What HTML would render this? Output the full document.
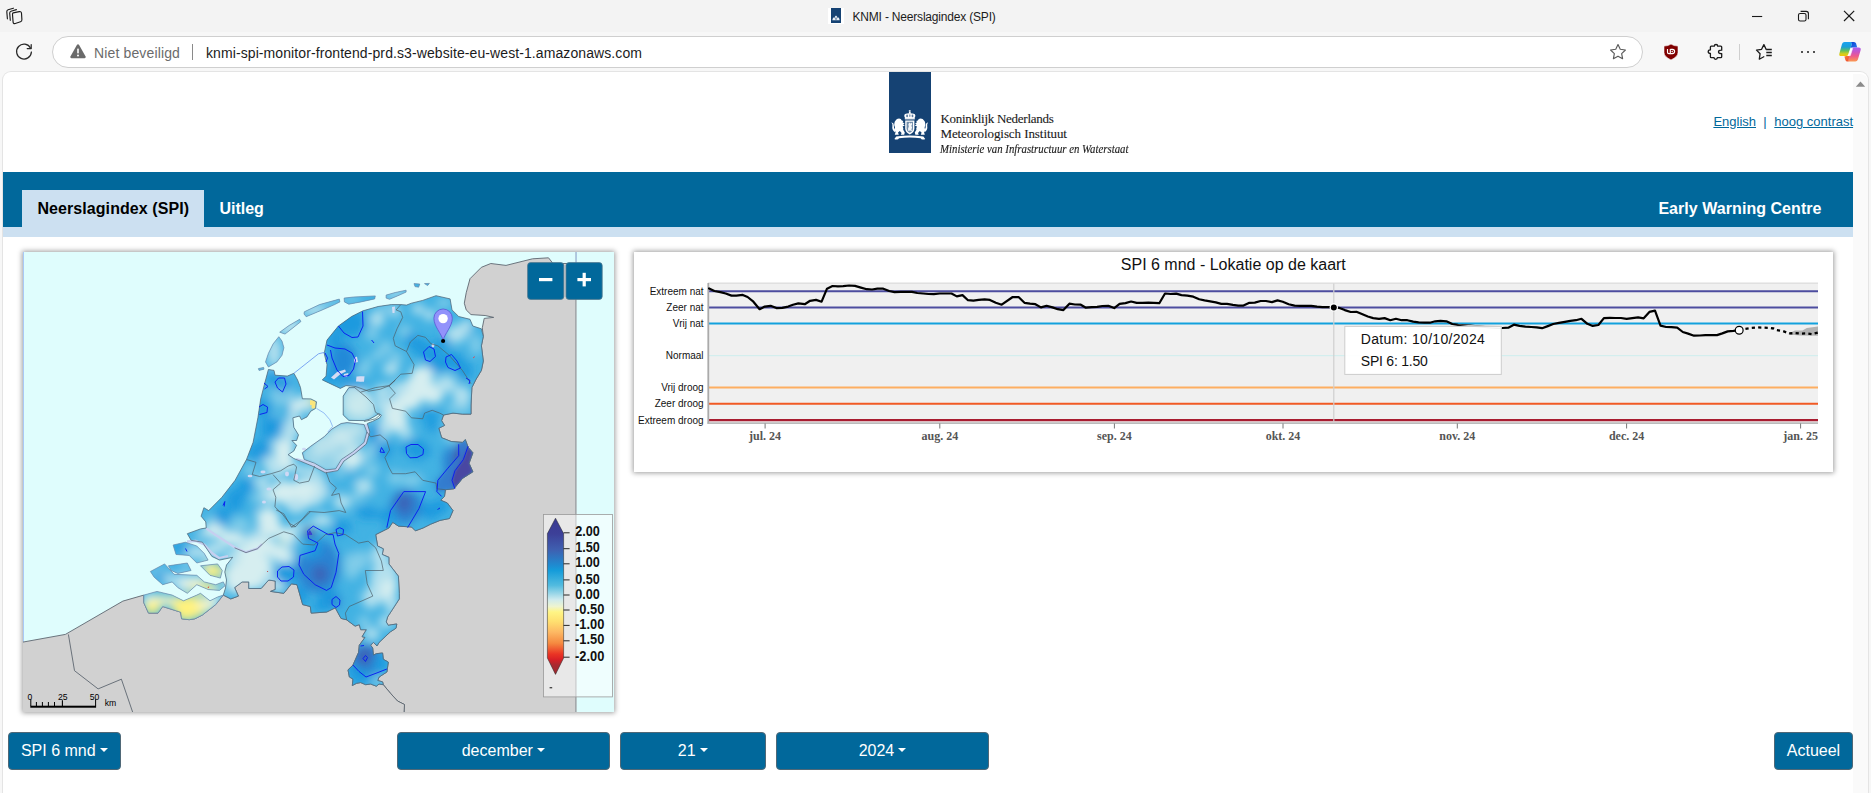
<!DOCTYPE html>
<html lang="nl"><head><meta charset="utf-8"><title>KNMI - Neerslagindex (SPI)</title>
<style>
html,body{margin:0;padding:0;overflow:hidden}
body{width:1871px;height:793px;overflow:hidden;background:#f7f7f7;position:relative;font-family:"Liberation Sans",sans-serif}
.abs{position:absolute}
.t{position:absolute;white-space:nowrap}
#titlebar{position:absolute;left:0;top:0;width:1871px;height:32px;background:#f3f3f3}
#toolbar{position:absolute;left:0;top:32px;width:1871px;height:40px;background:#f7f7f7}
#addr{position:absolute;left:51.7px;top:36px;width:1589.8px;height:29.5px;border:1px solid #cfcfcf;border-radius:16px;background:#fff}
#page{position:absolute;left:3px;top:72px;width:1865px;height:721px;background:#fff;border-radius:8px 8px 0 0;box-shadow:0 0 0 1px #e4e4e4}
#sb{position:absolute;left:1853px;top:74px;width:15px;height:719px;background:#fafafa;border-top-right-radius:8px}
.btn{position:absolute;top:732px;height:37.5px;box-sizing:border-box;background:#01689b;border:1px solid #4f6877;border-radius:4px;color:#fff;font:16px/35.5px "Liberation Sans",sans-serif;text-align:center;white-space:nowrap}
.caret{display:inline-block;margin-left:4.1px;vertical-align:4.1px;border-top:4.8px solid #fff;border-left:4.4px solid transparent;border-right:4.4px solid transparent}
.card{position:absolute;background:#fff;box-shadow:0 0 5px 1px rgba(0,0,0,.38)}
</style></head>
<body>
<div id="titlebar"></div><div id="toolbar"></div>
<svg class="abs" style="left:4px;top:6px" width="20" height="20" viewBox="0 0 20 20" fill="none" stroke="#1b1b1b" stroke-width="1.15" stroke-linejoin="round" stroke-linecap="round">
<path d="M9.2 6.9 L15.3 5.6 Q17.3 5.3 17.5 7.2 L17.9 13.6 Q18 15.2 16.5 15.7 L11.3 17.5 Q9.3 18.1 9.1 16.1 L8.5 8.6 Q8.4 7.2 9.2 6.9Z" fill="#f3f3f3"/>
<path d="M6.3 14.3 L5.7 7.2 Q5.6 5.6 7 5.2 L12.4 3.6"/>
<path d="M3.4 12.8 L2.8 5.8 Q2.7 4.2 4.1 3.8 L9.4 2.2"/>
</svg>
<div class="abs" style="left:828px;top:8px;width:16px;height:16px;background:#fff"></div>
<div class="abs" style="left:831px;top:8px;width:10px;height:15px;background:#154273"></div>
<svg class="abs" style="left:832px;top:15px" width="8" height="6" viewBox="0 0 8 6"><path d="M0.3 5.2 L1.2 2.2 L2.2 3.3 L3 1.6 L4 0.5 L5 1.6 L5.8 3.3 L6.8 2.2 L7.7 5.2 Z" fill="#e8eef6"/><rect x="3.1" y="2.6" width="1.8" height="2.2" fill="#154273" opacity=".55"/></svg>
<div class="t" style="top:10.64px;font:normal normal 12px/12px 'Liberation Sans', sans-serif;color:#1b1b1b;left:852.50px;letter-spacing:-0.19px;">KNMI - Neerslagindex (SPI)</div>
<svg class="abs" style="left:1740px;top:0" width="131" height="32" viewBox="1740 0 131 32" fill="none" stroke="#1a1a1a" stroke-width="1.1">
<path d="M1752 16.5 H1762.2"/>
<rect x="1798.5" y="13.5" width="7.5" height="7.5" rx="1.6"/>
<path d="M1800.6 11.4 H1806.2 Q1808.4 11.4 1808.4 13.6 V19.2"/>
<path d="M1844 10.8 L1854.2 21 M1854.2 10.8 L1844 21" stroke-width="1.2"/>
</svg>
<svg class="abs" style="left:12px;top:40px" width="24" height="24" viewBox="0 0 24 24" fill="none" stroke="#2a2a2a" stroke-width="1.25" stroke-linecap="round" stroke-linejoin="round">
<path d="M18.6 8.2 A7.4 7.4 0 1 0 19.4 12"/><path d="M19.2 4.6 V8.6 H15.2"/></svg>
<div id="addr"></div>
<svg class="abs" style="left:69px;top:43px" width="18" height="17" viewBox="0 0 18 17"><path d="M9 1.2 Q9.7 1.2 10.1 1.9 L16.6 13.6 Q17.2 15 15.7 15.2 H2.3 Q0.8 15 1.4 13.6 L7.9 1.9 Q8.3 1.2 9 1.2Z" fill="#6a6a6a"/><rect x="8.2" y="5.4" width="1.6" height="5" rx=".6" fill="#fff"/><circle cx="9" cy="12.4" r="1" fill="#fff"/></svg>
<div class="t" style="top:45.85px;font:normal normal 14px/14px 'Liberation Sans', sans-serif;color:#6b6b6b;left:94.00px;letter-spacing:0.14px;">Niet beveiligd</div>
<div class="abs" style="left:192px;top:44px;width:1px;height:16px;background:#8a8a8a"></div>
<div class="t" style="top:45.85px;font:normal normal 14px/14px 'Liberation Sans', sans-serif;color:#1b1b1b;left:206.00px;letter-spacing:0.09px;">knmi-spi-monitor-frontend-prd.s3-website-eu-west-1.amazonaws.com</div>
<svg class="abs" style="left:1608px;top:42px" width="20" height="20" viewBox="0 0 20 20" fill="none" stroke="#5a5a5a" stroke-width="1.15" stroke-linejoin="round"><path d="M10 2.6 L12.25 7.3 L17.4 8 L13.65 11.6 L14.6 16.7 L10 14.2 L5.4 16.7 L6.35 11.6 L2.6 8 L7.75 7.3 Z"/></svg>
<svg class="abs" style="left:1660px;top:40px" width="24" height="24" viewBox="1660 40 24 24"><path d="M1671 44.1 Q1673.6 46 1678 46.1 V52.4 Q1678 56.6 1671 59.9 Q1664 56.6 1664 52.4 V46.1 Q1668.4 46 1671 44.1Z" fill="#800000" stroke="#fff" stroke-width=".8" stroke-opacity=".7"/><path d="M1667.5 48.9 V52.3 Q1667.5 53.6 1668.8 53.6 H1670.3 V48.9" fill="none" stroke="#fff" stroke-width="1.15"/><path d="M1670.4 49.4 H1672.5 A2.1 2.1 0 0 1 1672.5 53.6 H1670.4" fill="none" stroke="#fff" stroke-width="1.15"/><path d="M1672.2 50.6 l.9 .9 l-.9 .9 l-.9 -.9z" fill="#fff"/></svg>
<svg class="abs" style="left:1704px;top:40px" width="24" height="24" viewBox="1704 40 24 24" fill="none" stroke="#1b1b1b" stroke-width="1.3" stroke-linejoin="round"><path d="M1711.3 46.2 H1714.3 C1714.3 45.4 1714.6 44.5 1716 44.5 C1717.4 44.5 1717.7 45.4 1717.7 46.2 H1720.8 Q1721.7 46.2 1721.7 47.1 V50.2 C1720.6 50.2 1718.5 50.3 1718.5 51.9 C1718.5 53.5 1720.6 53.6 1721.7 53.6 V56.7 Q1721.7 57.6 1720.8 57.6 H1717.4 C1717.4 58.5 1717 59.4 1715.7 59.4 C1714.4 59.4 1714 58.5 1714 57.6 H1711.3 Q1710.4 57.6 1710.4 56.7 V53.5 C1709.6 53.5 1708.2 53.3 1708.2 51.7 C1708.2 50.1 1709.6 49.9 1710.4 49.9 V47.1 Q1710.4 46.2 1711.3 46.2Z"/></svg>
<div class="abs" style="left:1739px;top:44px;width:1px;height:16px;background:#cfcfcf"></div>
<svg class="abs" style="left:1752px;top:40px" width="24" height="24" viewBox="1752 40 24 24" fill="none" stroke="#1b1b1b" stroke-width="1.3" stroke-linejoin="round" stroke-linecap="round"><path d="M1766.2 49.5 L1763.9 44.6 L1761.6 49.3 L1756.5 50.1 L1760.1 53.7 L1759.3 59.2 L1763.8 56.8"/><path d="M1766.3 49.5 H1771.8 M1766.3 52.5 H1771.8 M1766.3 55.5 H1771.8" stroke-linecap="butt"/></svg>
<div class="abs" style="left:1800.6px;top:50.6px;width:2.4px;height:2.4px;border-radius:50%;background:#1b1b1b;box-shadow:6px 0 0 #1b1b1b,12px 0 0 #1b1b1b"></div>
<svg class="abs" style="left:1836px;top:38px" width="28" height="28" viewBox="1836 38 28 28">
<defs><linearGradient id="cpA" x1="0" y1="0" x2="0" y2="1"><stop offset="0" stop-color="#1aa2f0"/><stop offset=".35" stop-color="#199fd8"/><stop offset=".62" stop-color="#5fbf60"/><stop offset=".85" stop-color="#d6cf1a"/><stop offset="1" stop-color="#f0c40a"/></linearGradient>
<linearGradient id="cpB" x1="0" y1="0" x2="0" y2="1"><stop offset="0" stop-color="#a95cf0"/><stop offset=".3" stop-color="#c855c6"/><stop offset=".6" stop-color="#ee5a8e"/><stop offset="1" stop-color="#fb9a4e"/></linearGradient>
<linearGradient id="cpC" x1="0" y1="0" x2="1" y2="1"><stop offset="0" stop-color="#0a3fd0"/><stop offset="1" stop-color="#2a7cf0"/></linearGradient>
<linearGradient id="cpD" x1="0" y1="0" x2="1" y2="1"><stop offset="0" stop-color="#fb7a3a"/><stop offset="1" stop-color="#e8442e"/></linearGradient></defs>
<path d="M1850.4 42 H1854 Q1855.6 42 1856.1 43.6 L1857.2 47.6 H1852.2 Q1850.8 47.6 1850.3 49 L1851.6 44.4 Q1852 42.6 1850.4 42Z" fill="url(#cpC)"/>
<path d="M1846.2 56 H1851.4 L1850 60 Q1849.4 61.6 1847.8 61.6 H1847.4 Q1845.9 61.6 1845.4 60 L1844.4 56.4Z" fill="url(#cpD)"/>
<path d="M1844.6 42 H1850.2 Q1852.4 42 1851.7 44.2 L1848.7 54.2 Q1848.1 56 1846.2 56 H1841.2 Q1838.6 56 1839.4 53.4 L1842 44 Q1842.6 42 1844.6 42Z" fill="url(#cpA)"/>
<path d="M1853.6 47.6 H1858.6 Q1861.4 47.6 1860.6 50.2 L1857.9 59.6 Q1857.3 61.6 1855.3 61.6 H1849.4 Q1847.6 61.6 1848.3 59.6 L1851.2 49.4 Q1851.7 47.6 1853.6 47.6Z" fill="url(#cpB)"/>
<path d="M1850.6 48.4 H1852.6 L1850.3 55.6 H1848.2Z" fill="#fff" stroke="#fff" stroke-width=".6" stroke-linejoin="round"/>
</svg>
<div id="page"></div>
<div id="sb"></div>
<svg class="abs" style="left:1855px;top:81px" width="11" height="7" viewBox="0 0 11 7"><path d="M5.5 0.6 L10.2 5.8 H0.8 Z" fill="#8b8b8b"/></svg>
<div class="abs" style="left:889px;top:72px;width:42px;height:80.5px;background:#154273"></div>
<svg class="abs" style="left:890px;top:108px" width="40" height="34" viewBox="0 0 40 34" fill="#fff">
<!-- crown -->
<path d="M15 9.9 Q13.2 6.6 15.8 5.7 Q17.8 5.1 19.8 5.3 Q21.8 5.1 23.8 5.7 Q26.4 6.6 24.6 9.9 Z"/>
<ellipse cx="17.1" cy="7.9" rx=".9" ry="1.3" fill="#154273" opacity=".7"/><ellipse cx="22.5" cy="7.9" rx=".9" ry="1.3" fill="#154273" opacity=".7"/><ellipse cx="19.8" cy="7.7" rx=".8" ry="1.4" fill="#154273" opacity=".5"/>
<circle cx="19.8" cy="4.7" r=".95"/><rect x="19.4" y="2" width=".8" height="2.4"/><rect x="18.7" y="2.6" width="2.2" height=".7"/>
<rect x="14.8" y="10.1" width="10" height="1.3"/>
<!-- shield -->
<path d="M15.2 12.4 H24.4 V20.6 Q24.4 24.6 19.8 26.4 Q15.2 24.6 15.2 20.6 Z"/>
<path d="M16.6 13.8 H23 V20.4 Q23 23.2 19.8 24.8 Q16.6 23.2 16.6 20.4 Z" fill="#154273" opacity=".6"/>
<path d="M18.2 23 Q17.6 20 18.8 18.4 Q17.6 16.4 19.4 14.6 L20.6 15.6 L22 14.8 Q22.6 16.6 21.4 17.8 Q22.8 19.6 21.4 21.4 L22.2 23.2 L20 22.4 Z" fill="#fff" opacity=".92"/>
<!-- left lion -->
<path d="M5.6 12.6 Q6.6 10.4 9 10.4 Q11.2 10.6 11.8 12.4 L13.4 13 L12.6 14.2 L14.6 15.4 L13 16.2 L14.8 17.6 L12.6 18.4 Q13.8 20 13.2 21.8 L14.8 24.6 L14.2 26.8 H10.8 L11.6 25 L9.8 23 L8 24.6 L8.8 26.8 H4.8 L5.6 24 Q3.8 21.8 5 19.2 Q3.6 17.6 4.4 15.2 Q4.4 13.6 5.6 12.6Z"/>
<path d="M5 24.2 Q1.6 22 2.4 18 Q2.8 15.6 1.4 14.4 Q3.8 14.2 3.8 17 Q3.4 20.6 5.6 22.4Z"/>
<!-- right lion -->
<path d="M34 12.6 Q33 10.4 30.6 10.4 Q28.4 10.6 27.8 12.4 L26.2 13 L27 14.2 L25 15.4 L26.6 16.2 L24.8 17.6 L27 18.4 Q25.8 20 26.4 21.8 L24.8 24.6 L25.4 26.8 H28.8 L28 25 L29.8 23 L31.6 24.6 L30.8 26.8 H34.8 L34 24 Q35.8 21.8 34.6 19.2 Q36 17.6 35.2 15.2 Q35.2 13.6 34 12.6Z"/>
<path d="M34.6 24.2 Q38 22 37.2 18 Q36.8 15.6 38.2 14.4 Q35.8 14.2 35.8 17 Q36.2 20.6 34 22.4Z"/>
<!-- ribbon -->
<path d="M6.2 28.4 Q19.8 26.6 33.4 28.4 L35.2 31 Q33.8 32 31.4 31.2 L30.6 30.2 Q19.8 29 9 30.2 L8.2 31.2 Q5.8 32 4.4 31 Z"/>
</svg>
<div class="t" style="top:111.81px;font:normal normal 13px/13px 'Liberation Serif', serif;color:#1c1c1c;left:940.40px;letter-spacing:-0.27px;-webkit-text-stroke:.12px #1c1c1c;">Koninklijk Nederlands</div>
<div class="t" style="top:126.71px;font:normal normal 13px/13px 'Liberation Serif', serif;color:#1c1c1c;left:940.40px;letter-spacing:-0.07px;-webkit-text-stroke:.12px #1c1c1c;">Meteorologisch Instituut</div>
<div class="t" style="top:141.51px;font:italic normal 13px/13px 'Liberation Serif', serif;color:#1c1c1c;left:940.40px;transform:scaleX(.83);transform-origin:0 0;-webkit-text-stroke:.15px #1c1c1c;">Ministerie van Infrastructuur en Waterstaat</div>
<div class="t" style="top:114.50px;font:normal normal 13px/13px 'Liberation Sans', sans-serif;color:#01689b;left:1713.40px;"><u>English</u></div>
<div class="t" style="top:114.50px;font:normal normal 13px/13px 'Liberation Sans', sans-serif;color:#01689b;left:1763.20px;">|</div>
<div class="t" style="top:114.50px;font:normal normal 13px/13px 'Liberation Sans', sans-serif;color:#01689b;left:1774.30px;"><u>hoog contrast</u></div>
<div class="abs" style="left:3px;top:172px;width:1850px;height:55px;background:#01689b"></div>
<div class="abs" style="left:3px;top:227px;width:1850px;height:10px;background:#cce0f1"></div>
<div class="abs" style="left:22px;top:190px;width:182px;height:37px;background:#cce0f1"></div>
<div class="t" style="top:201.26px;font:normal bold 16px/16px 'Liberation Sans', sans-serif;color:#000;left:37.40px;letter-spacing:0.08px;">Neerslagindex (SPI)</div>
<div class="t" style="top:201.26px;font:normal bold 16px/16px 'Liberation Sans', sans-serif;color:#fff;left:219.40px;">Uitleg</div>
<div class="t" style="top:201.26px;font:normal bold 16px/16px 'Liberation Sans', sans-serif;color:#fff;left:1658.40px;letter-spacing:0.05px;">Early Warning Centre</div>
<div class="card" style="left:23px;top:252px;width:591px;height:460px;background:#dffdfd"></div>
<svg class="abs" style="left:23px;top:252px" width="591" height="460" viewBox="23 252 591 460">
<defs><clipPath id="nl">
<polygon points="268.4,369.5 274,370.4 275,375.2 287.3,376.1 293.9,373.3 297.6,380 300.5,387.5 302.4,398.8 310.8,398.9 316.5,401.8 315.6,408.4 310.8,411.2 307,416.9 301.4,419.7 299.5,416 292.9,417.8 293.8,427.3 298.5,434.9 296.6,440.5 291.9,440.5 296.6,445.3 293.8,451 288.1,454.7 293.8,458.5 302,461.8 313.6,466.6 325.5,472.8 337.8,470.6 344,461 354.8,453.6 366.3,444 369.8,432 367.3,423.5 372.5,421.4 379.5,418 381.4,415.2 379,413.6 374.5,416.4 369,419.4 364.1,420.6 348.9,420.4 343.2,415 343.2,396.1 348.9,387.6 354.6,387.6 355.4,386.5 346,385.6 340.3,388.4 322.3,379.9 326.1,376.1 327,364.7 324.2,353.4 327,340.1 338.4,326 351.6,316.5 363,310.8 378.1,306.5 391.4,304.6 400.8,304.6 406.5,305.1 411.4,303.2 422.7,300.4 436,295.7 450.1,298.9 452,309.9 458.7,316.5 470,319.3 472.8,326 481.4,328.8 483.3,336.4 481.4,345.8 483.3,361 481.4,370.4 475.7,379.9 471.9,387.5 471,405 471,414.1 462.5,414.1 453,413.1 443.5,415 441.6,420.7 444.5,425.4 438.8,428.2 441.6,437.7 451.1,441.5 462.5,442.4 465.3,439.6 468.1,447.2 472.9,452.8 469.1,463.3 472.9,471.8 462.5,478.4 453.9,488.8 445.4,489.7 444.5,496.4 440.7,500.2 447.3,503 453,510.6 449.5,518.5 440,520.4 430.6,524.2 423,528 415.4,530.8 411.6,527 398.4,526.1 392.7,522.3 388.9,528 375.7,534.6 377.6,546 383.3,548.8 382.3,554.5 388.9,557.3 388.9,563.9 398.4,576.2 399.3,593.3 399.3,598.9 387.6,616.9 386.2,621.9 388.3,625.4 391.8,624.7 396.8,624 396,628.2 390.4,631.8 379.1,642.4 377,645.9 373.4,642.4 370.6,645.2 372.7,648 373.4,655.1 376.3,653.7 382.6,653 383.3,659.3 388.3,662.1 386.9,672 379.1,677 377.7,680.5 382.6,681.9 383.3,684.7 379.1,684 376.3,686.2 370.6,684 365.7,684.7 360.7,682.6 356.5,683.3 352.3,685.5 353,679.1 349.4,677 348,669.9 353,665 358.6,652.3 359.3,645.2 365,637.4 362.1,636.7 366.4,629.7 360.7,629.7 359.3,624.7 355.1,626.1 346.6,619.8 341,618.4 335.3,607.8 326.8,612 311.2,613.1 310.3,606.5 302.7,604.6 297,584.7 291.4,583.8 283.8,593.3 270.6,591.4 275.3,589.5 275.3,581 268.7,580 261.1,588.5 248.8,588.5 248.8,581.9 242.2,581.9 234.6,587.6 238.4,596.1 230.8,598.9 223.3,595.1 225.5,588 226.5,580 224.8,572 226.5,565 232.7,557.3 219.5,560.1 211.9,556.4 202.4,542.2 191.1,540.3 187.3,533.7 200.5,528.9 206.2,528 205.8,521.9 201.1,516.2 203.9,507.7 208.7,510.6 221.9,497.3 235.1,480.3 246.5,459.5 253.1,442.4 257.9,417.8 260.7,398.9 264.6,383.7"/><polygon points="302.3,452.8 310.8,446.2 324.1,436.8 331.6,429.2 341.1,423.5 347,422.6 364.1,424.5 366.9,432 364.1,442.4 352.7,451.9 341.4,459.5 335.7,468.9 326,469.9 314.6,463.3 304.2,459.5"/>
<polygon points="278.8,336.7 282,341.1 283.9,347.7 282,355.3 276.9,361.9 268.4,367 265.5,361.9 268.4,353.4 273.1,343.9"/>
<polygon points="279.7,332.2 289.2,325.4 299.6,319.3 300.9,321.6 293,327.8 285,334.1"/>
<polygon points="304.3,311.8 319.5,304.6 339.3,299.1 339.9,301.9 334.6,304.6 323.3,309.5 306.2,316.7 304,314"/>
<polygon points="344.1,298.1 353.5,297 375.3,295.9 374.7,298.9 361.1,301.9 348.8,304.2 344.4,301.9"/>
<polygon points="386.1,295.1 395.2,292.5 406.1,290.2 406.1,292.1 398,295.7 389.5,299.3 386.1,298.1"/>
<polygon points="414,283.6 419.8,284 418.6,287.2 415,286.6"/>
<polygon points="424.5,283.6 429.4,283.4 427.6,285.6"/>
<polygon points="258.4,368.6 263.6,367.4 264,369.2 259,370.4"/>
<polygon points="173.1,545 185.4,542.2 196.8,546 204.3,553.5 208.1,560.1 196.8,563 189.2,555.4 176,554.5"/>
<polygon points="168.4,565.8 187.3,563 191.1,570.5 177.8,573.4 171.2,570.5"/>
<polygon points="200.5,565.8 217.6,563.9 222.3,570.5 220.4,578.1 210,575.3"/>
<polygon points="150.4,571.5 164.6,563.9 174.1,574.3 196.8,575.3 204.3,581.9 215.7,584.7 223.3,581.9 225.1,585.7 219.5,590.4 208.1,589.5 196.8,584.7 187.3,593.3 177.8,587.6 172.2,581.9 162.7,584.7 154.2,577.2"/>
<polygon points="143.8,595.1 157,591.4 172.2,595.1 183.5,600.8 196.8,595.1 200.5,593.3 210,600.8 217.6,597 223.3,595.1 215.7,604.6 202.4,615 194.9,618.8 189.2,619.7 181.6,618.8 180.7,612.2 162.7,606.5 158,613.1 148.5,613.1 143.8,602.7"/>
</clipPath><filter id="bl" x="-50%" y="-50%" width="200%" height="200%"><feGaussianBlur stdDeviation="5"/></filter><filter id="bl2" x="-50%" y="-50%" width="200%" height="200%"><feGaussianBlur stdDeviation="1.6"/></filter>
<linearGradient id="lg" x1="0" y1="0" x2="0" y2="1">
<stop offset="0" stop-color="#3a3a92"/>
<stop offset="0.1" stop-color="#3d4098"/>
<stop offset="0.2" stop-color="#3f5fb0"/>
<stop offset="0.3" stop-color="#1f8ad0"/>
<stop offset="0.335" stop-color="#159cda"/>
<stop offset="0.43" stop-color="#52bbdf"/>
<stop offset="0.52" stop-color="#cdeaee"/>
<stop offset="0.565" stop-color="#eef4d0"/>
<stop offset="0.6" stop-color="#fff585"/>
<stop offset="0.66" stop-color="#ffe070"/>
<stop offset="0.73" stop-color="#fdb863"/>
<stop offset="0.8" stop-color="#f58a40"/>
<stop offset="0.87" stop-color="#ea3424"/>
<stop offset="0.905" stop-color="#d82026"/>
<stop offset="0.94" stop-color="#a82a30"/>
<stop offset="1" stop-color="#9e2830"/>
</linearGradient></defs>
<rect x="23" y="252" width="591" height="460" fill="#dffdfd"/><rect x="23" y="252" width="1" height="390" fill="#a9c9f7"/>
<polygon points="548.5,257.8 532.5,258.8 506,265.4 490.8,263.5 481.4,267.3 470,278.7 466.2,292.8 464.3,303.2 466.2,309.9 471,314.6 485.1,315.5 493.7,317.4 484.2,318.4 482.3,327.8 483.3,336.4 481.4,345.8 483.3,361 481.4,370.4 475.7,379.9 471.9,387.5 471,405 471,414.1 462.5,414.1 453,413.1 443.5,415 441.6,420.7 444.5,425.4 438.8,428.2 441.6,437.7 451.1,441.5 462.5,442.4 465.3,439.6 468.1,447.2 472.9,452.8 469.1,463.3 472.9,471.8 462.5,478.4 453.9,488.8 445.4,489.7 444.5,496.4 440.7,500.2 447.3,503 453,510.6 449.5,518.5 440,520.4 430.6,524.2 423,528 415.4,530.8 411.6,527 398.4,526.1 392.7,522.3 388.9,528 375.7,534.6 377.6,546 383.3,548.8 382.3,554.5 388.9,557.3 388.9,563.9 398.4,576.2 399.3,593.3 399.3,598.9 387.6,616.9 386.2,621.9 388.3,625.4 391.8,624.7 396.8,624 396,628.2 390.4,631.8 379.1,642.4 377,645.9 373.4,642.4 370.6,645.2 372.7,648 373.4,655.1 376.3,653.7 382.6,653 383.3,659.3 388.3,662.1 386.9,672 379.1,677 377.7,680.5 382.6,681.9 383.3,684.7 390.4,693.2 397.5,701 404.5,704.5 403.8,716 576,716 576,263.5 553,263.5" fill="#d1d1d1" stroke="#5d6670" stroke-width=".9" stroke-linejoin="round"/>
<polygon points="19,642.8 65.4,634.4 122.9,601.1 143.8,595.1 143.8,602.7 148.5,613.1 158,613.1 162.7,606.5 180.7,612.2 181.6,618.8 189.2,619.7 194.9,618.8 202.4,615 215.7,604.6 223.3,595.1 230.8,598.9 238.4,596.1 234.6,587.6 242.2,581.9 248.8,581.9 248.8,588.5 261.1,588.5 268.7,580 275.3,581 275.3,589.5 270.6,591.4 283.8,593.3 291.4,583.8 297,584.7 302.7,604.6 310.3,606.5 311.2,613.1 326.8,612 335.3,607.8 341,618.4 346.6,619.8 355.1,626.1 359.3,624.7 360.7,629.7 366.4,629.7 362.1,636.7 365,637.4 359.3,645.2 358.6,652.3 353,665 348,669.9 349.4,677 353,679.1 352.3,685.5 356.5,683.3 360.7,682.6 365.7,684.7 370.6,684 376.3,686.2 379.1,684 383.3,684.7 390.4,693.2 397.5,701 404.5,704.5 403.8,716 19,716" fill="#d1d1d1" stroke="#5d6670" stroke-width=".9" stroke-linejoin="round"/>
<rect x="24" y="712" width="590" height="3" fill="#d1d1d1"/>
<polyline points="68.4,634.4 74.5,670.7 98.1,688.9 121.4,679.2 132.6,712" fill="none" stroke="#5d6670" stroke-width=".9"/>
<rect x="576" y="252" width="38" height="460" fill="#dffdfd"/><rect x="575.4" y="252" width="1.3" height="460" fill="#a9adb0"/><rect x="575.6" y="252" width="1" height="11" fill="#a5c8f2"/>
<g clip-path="url(#nl)"><rect x="130" y="270" width="370" height="430" fill="#42b2e3"/><g filter="url(#bl)">
<ellipse cx="274" cy="352" rx="7.8" ry="15.6" fill="#b2e0ee"/>
<ellipse cx="290" cy="327" rx="13.0" ry="9.1" fill="#b2e0ee"/>
<ellipse cx="314" cy="310" rx="13.0" ry="6.5" fill="#b2e0ee"/>
<ellipse cx="332" cy="302" rx="10.4" ry="3.9" fill="#80cce9"/>
<ellipse cx="352" cy="300" rx="10.4" ry="3.9" fill="#80cce9"/>
<ellipse cx="368" cy="298" rx="9.1" ry="3.9" fill="#42b2e3"/>
<ellipse cx="396" cy="294" rx="13.0" ry="3.9" fill="#b2e0ee"/>
<ellipse cx="417" cy="285" rx="3.9" ry="2.6" fill="#42b2e3"/>
<ellipse cx="427" cy="284" rx="3.9" ry="2.6" fill="#42b2e3"/>
<ellipse cx="261" cy="369" rx="3.9" ry="2.6" fill="#b2e0ee"/>
<ellipse cx="350" cy="323" rx="16.9" ry="14.3" fill="#1c9adf"/>
<ellipse cx="343" cy="360" rx="13.0" ry="16.9" fill="#2489d8"/>
<ellipse cx="334" cy="340" rx="7.8" ry="10.4" fill="#1c9adf"/>
<ellipse cx="352" cy="384" rx="13.0" ry="6.5" fill="#1c9adf"/>
<ellipse cx="330" cy="378" rx="7.8" ry="6.5" fill="#1c9adf"/>
<ellipse cx="377" cy="319" rx="7.8" ry="7.8" fill="#b2e0ee"/>
<ellipse cx="372" cy="334" rx="6.5" ry="6.5" fill="#80cce9"/>
<ellipse cx="378" cy="355" rx="6.5" ry="5.2" fill="#80cce9"/>
<ellipse cx="367" cy="363" rx="5.2" ry="5.2" fill="#80cce9"/>
<ellipse cx="386" cy="347" rx="6.5" ry="6.5" fill="#80cce9"/>
<ellipse cx="396" cy="358" rx="6.5" ry="6.5" fill="#80cce9"/>
<ellipse cx="391" cy="369" rx="7.8" ry="6.5" fill="#b2e0ee"/>
<ellipse cx="363" cy="371" rx="6.5" ry="5.2" fill="#80cce9"/>
<ellipse cx="385" cy="308" rx="7.8" ry="3.9" fill="#80cce9"/>
<ellipse cx="395" cy="312" rx="5.2" ry="5.2" fill="#b2e0ee"/>
<ellipse cx="418" cy="309" rx="6.5" ry="5.2" fill="#b2e0ee"/>
<ellipse cx="430" cy="315" rx="6.5" ry="5.2" fill="#b2e0ee"/>
<ellipse cx="405" cy="331" rx="6.5" ry="6.5" fill="#80cce9"/>
<ellipse cx="456" cy="334" rx="10.4" ry="9.1" fill="#b2e0ee"/>
<ellipse cx="467" cy="327" rx="7.8" ry="7.8" fill="#b2e0ee"/>
<ellipse cx="444" cy="303" rx="7.8" ry="5.2" fill="#80cce9"/>
<ellipse cx="476" cy="345" rx="6.5" ry="10.4" fill="#80cce9"/>
<ellipse cx="421" cy="347" rx="10.4" ry="7.8" fill="#1c9adf"/>
<ellipse cx="431" cy="354" rx="10.4" ry="7.8" fill="#1c9adf"/>
<ellipse cx="443" cy="343" rx="7.8" ry="6.5" fill="#1c9adf"/>
<ellipse cx="452" cy="361" rx="11.7" ry="9.1" fill="#1c9adf"/>
<ellipse cx="465" cy="371" rx="7.8" ry="9.1" fill="#1c9adf"/>
<ellipse cx="437" cy="366" rx="10.4" ry="6.5" fill="#1c9adf"/>
<ellipse cx="412" cy="340" rx="6.5" ry="7.8" fill="#1c9adf"/>
<ellipse cx="474" cy="330" rx="5.2" ry="5.2" fill="#42b2e3"/>
<ellipse cx="422" cy="375" rx="11.7" ry="9.1" fill="#d6eef0"/>
<ellipse cx="418" cy="389" rx="18.2" ry="11.7" fill="#d6eef0"/>
<ellipse cx="408" cy="401" rx="13.0" ry="9.1" fill="#d6eef0"/>
<ellipse cx="446" cy="384" rx="10.4" ry="9.1" fill="#b2e0ee"/>
<ellipse cx="462" cy="396" rx="9.1" ry="10.4" fill="#b2e0ee"/>
<ellipse cx="433" cy="396" rx="10.4" ry="7.8" fill="#d6eef0"/>
<ellipse cx="400" cy="388" rx="9.1" ry="6.5" fill="#b2e0ee"/>
<ellipse cx="456" cy="408" rx="10.4" ry="5.2" fill="#80cce9"/>
<ellipse cx="430" cy="416" rx="10.4" ry="5.2" fill="#1c9adf"/>
<ellipse cx="466" cy="409" rx="5.2" ry="5.2" fill="#80cce9"/>
<ellipse cx="384" cy="392" rx="10.4" ry="7.8" fill="#b2e0ee"/>
<ellipse cx="396" cy="406" rx="10.4" ry="9.1" fill="#d6eef0"/>
<ellipse cx="381" cy="405" rx="6.5" ry="6.5" fill="#b2e0ee"/>
<ellipse cx="365" cy="456" rx="10.4" ry="6.5" fill="#80cce9"/>
<ellipse cx="341" cy="473" rx="7.8" ry="5.2" fill="#80cce9"/>
<ellipse cx="373" cy="449" rx="6.5" ry="6.5" fill="#80cce9"/>
<ellipse cx="388" cy="412" rx="7.8" ry="6.5" fill="#b2e0ee"/>
<ellipse cx="358" cy="403" rx="14.3" ry="14.3" fill="#d6eef0"/>
<ellipse cx="351" cy="394" rx="6.5" ry="6.5" fill="#b2e0ee"/>
<ellipse cx="368" cy="414" rx="6.5" ry="5.2" fill="#b2e0ee"/>
<ellipse cx="326" cy="444" rx="13.0" ry="9.1" fill="#b2e0ee"/>
<ellipse cx="342" cy="436" rx="11.7" ry="9.1" fill="#d6eef0"/>
<ellipse cx="355" cy="430" rx="9.1" ry="6.5" fill="#b2e0ee"/>
<ellipse cx="316" cy="455" rx="9.1" ry="6.5" fill="#80cce9"/>
<ellipse cx="338" cy="458" rx="6.5" ry="7.8" fill="#80cce9"/>
<ellipse cx="352" cy="447" rx="7.8" ry="5.2" fill="#b2e0ee"/>
<ellipse cx="395" cy="420" rx="13.0" ry="11.7" fill="#d6eef0"/>
<ellipse cx="384" cy="428" rx="9.1" ry="7.8" fill="#b2e0ee"/>
<ellipse cx="378" cy="441" rx="7.8" ry="7.8" fill="#b2e0ee"/>
<ellipse cx="405" cy="432" rx="7.8" ry="6.5" fill="#b2e0ee"/>
<ellipse cx="392" cy="395" rx="6.5" ry="5.2" fill="#80cce9"/>
<ellipse cx="416" cy="450" rx="15.6" ry="10.4" fill="#1c9adf"/>
<ellipse cx="384" cy="450" rx="9.1" ry="9.1" fill="#1c9adf"/>
<ellipse cx="400" cy="461" rx="11.7" ry="7.8" fill="#42b2e3"/>
<ellipse cx="374" cy="434" rx="6.5" ry="10.4" fill="#1c9adf"/>
<ellipse cx="437" cy="440" rx="10.4" ry="10.4" fill="#42b2e3"/>
<ellipse cx="453" cy="436" rx="9.1" ry="6.5" fill="#80cce9"/>
<ellipse cx="455" cy="425" rx="10.4" ry="6.5" fill="#80cce9"/>
<ellipse cx="432" cy="427" rx="6.5" ry="5.2" fill="#1c9adf"/>
<ellipse cx="463" cy="464" rx="9.1" ry="19.5" fill="#47409a"/>
<ellipse cx="455" cy="476" rx="9.1" ry="13.0" fill="#3a64b8"/>
<ellipse cx="449" cy="462" rx="6.5" ry="15.6" fill="#2a82d2"/>
<ellipse cx="443" cy="484" rx="7.8" ry="7.8" fill="#2a82d2"/>
<ellipse cx="462" cy="447" rx="6.5" ry="6.5" fill="#3a64b8"/>
<ellipse cx="430" cy="470" rx="9.1" ry="7.8" fill="#42b2e3"/>
<ellipse cx="412" cy="480" rx="10.4" ry="6.5" fill="#80cce9"/>
<ellipse cx="395" cy="478" rx="7.8" ry="6.5" fill="#80cce9"/>
<ellipse cx="352" cy="460" rx="10.4" ry="9.1" fill="#d6eef0"/>
<ellipse cx="364" cy="486" rx="9.1" ry="7.8" fill="#b2e0ee"/>
<ellipse cx="342" cy="502" rx="9.1" ry="7.8" fill="#b2e0ee"/>
<ellipse cx="372" cy="470" rx="7.8" ry="6.5" fill="#80cce9"/>
<ellipse cx="350" cy="478" rx="9.1" ry="6.5" fill="#42b2e3"/>
<ellipse cx="330" cy="488" rx="7.8" ry="6.5" fill="#42b2e3"/>
<ellipse cx="380" cy="500" rx="10.4" ry="7.8" fill="#42b2e3"/>
<ellipse cx="368" cy="513" rx="11.7" ry="6.5" fill="#1c9adf"/>
<ellipse cx="342" cy="527" rx="10.4" ry="6.5" fill="#1c9adf"/>
<ellipse cx="357" cy="497" rx="6.5" ry="5.2" fill="#80cce9"/>
<ellipse cx="406" cy="507" rx="16.9" ry="16.9" fill="#2a82d2"/>
<ellipse cx="404" cy="503" rx="7.8" ry="10.4" fill="#3a64b8"/>
<ellipse cx="430" cy="511" rx="10.4" ry="9.1" fill="#1c9adf"/>
<ellipse cx="441" cy="506" rx="7.8" ry="7.8" fill="#1c9adf"/>
<ellipse cx="388" cy="516" rx="9.1" ry="7.8" fill="#1c9adf"/>
<ellipse cx="420" cy="522" rx="6.5" ry="5.2" fill="#42b2e3"/>
<ellipse cx="322" cy="520" rx="10.4" ry="6.5" fill="#b2e0ee"/>
<ellipse cx="310" cy="524" rx="7.8" ry="5.2" fill="#80cce9"/>
<ellipse cx="286" cy="402" rx="10.4" ry="13.0" fill="#80cce9"/>
<ellipse cx="280" cy="440" rx="10.4" ry="11.7" fill="#80cce9"/>
<ellipse cx="291" cy="422" rx="6.5" ry="10.4" fill="#b2e0ee"/>
<ellipse cx="276" cy="420" rx="6.5" ry="7.8" fill="#80cce9"/>
<ellipse cx="284" cy="376" rx="6.5" ry="5.2" fill="#80cce9"/>
<ellipse cx="281" cy="385" rx="10.4" ry="10.4" fill="#1c9adf"/>
<ellipse cx="263" cy="408" rx="9.1" ry="9.1" fill="#1c9adf"/>
<ellipse cx="272" cy="428" rx="11.7" ry="11.7" fill="#1c9adf"/>
<ellipse cx="262" cy="450" rx="7.8" ry="11.7" fill="#1c9adf"/>
<ellipse cx="286" cy="412" rx="9.1" ry="9.1" fill="#42b2e3"/>
<ellipse cx="270" cy="376" rx="5.2" ry="5.2" fill="#1c9adf"/>
<ellipse cx="290" cy="395" rx="5.2" ry="7.8" fill="#80cce9"/>
<ellipse cx="298" cy="406" rx="7.8" ry="6.5" fill="#d6eef0"/>
<ellipse cx="306" cy="400" rx="6.5" ry="5.2" fill="#d6eef0"/>
<ellipse cx="310" cy="410" rx="5.2" ry="3.9" fill="#b2e0ee"/>
<ellipse cx="296" cy="425" rx="6.5" ry="9.1" fill="#b2e0ee"/>
<ellipse cx="284" cy="440" rx="7.8" ry="7.8" fill="#80cce9"/>
<ellipse cx="252" cy="452" rx="5.2" ry="7.8" fill="#1c9adf"/>
<ellipse cx="283" cy="462" rx="11.7" ry="10.4" fill="#d6eef0"/>
<ellipse cx="270" cy="462" rx="7.8" ry="6.5" fill="#b2e0ee"/>
<ellipse cx="300" cy="470" rx="7.8" ry="5.2" fill="#b2e0ee"/>
<ellipse cx="290" cy="432" rx="7.8" ry="11.7" fill="#b2e0ee"/>
<ellipse cx="284" cy="449" rx="10.4" ry="9.1" fill="#d6eef0"/>
<ellipse cx="276" cy="471" rx="10.4" ry="6.5" fill="#b2e0ee"/>
<ellipse cx="268" cy="496" rx="9.1" ry="9.1" fill="#b2e0ee"/>
<ellipse cx="301" cy="500" rx="11.7" ry="9.1" fill="#d6eef0"/>
<ellipse cx="320" cy="492" rx="9.1" ry="9.1" fill="#b2e0ee"/>
<ellipse cx="312" cy="471" rx="7.8" ry="5.2" fill="#b2e0ee"/>
<ellipse cx="258" cy="498" rx="6.5" ry="6.5" fill="#80cce9"/>
<ellipse cx="322" cy="448" rx="10.4" ry="6.5" fill="#b2e0ee"/>
<ellipse cx="293" cy="415" rx="5.2" ry="3.9" fill="#b2e0ee"/>
<ellipse cx="276" cy="395" rx="5.2" ry="7.8" fill="#80cce9"/>
<ellipse cx="305" cy="490" rx="14.3" ry="11.7" fill="#d6eef0"/>
<ellipse cx="284" cy="492" rx="13.0" ry="11.7" fill="#d6eef0"/>
<ellipse cx="268" cy="518" rx="11.7" ry="10.4" fill="#d6eef0"/>
<ellipse cx="262" cy="482" rx="7.8" ry="6.5" fill="#b2e0ee"/>
<ellipse cx="250" cy="470" rx="6.5" ry="6.5" fill="#80cce9"/>
<ellipse cx="296" cy="506" rx="10.4" ry="7.8" fill="#b2e0ee"/>
<ellipse cx="318" cy="480" rx="7.8" ry="6.5" fill="#b2e0ee"/>
<ellipse cx="316" cy="500" rx="6.5" ry="6.5" fill="#b2e0ee"/>
<ellipse cx="236" cy="500" rx="10.4" ry="11.7" fill="#1c9adf"/>
<ellipse cx="222" cy="516" rx="9.1" ry="9.1" fill="#1c9adf"/>
<ellipse cx="246" cy="486" rx="7.8" ry="7.8" fill="#1c9adf"/>
<ellipse cx="250" cy="506" rx="7.8" ry="6.5" fill="#42b2e3"/>
<ellipse cx="240" cy="524" rx="10.4" ry="6.5" fill="#80cce9"/>
<ellipse cx="212" cy="522" rx="6.5" ry="6.5" fill="#80cce9"/>
<ellipse cx="256" cy="532" rx="7.8" ry="5.2" fill="#80cce9"/>
<ellipse cx="228" cy="534" rx="10.4" ry="5.2" fill="#80cce9"/>
<ellipse cx="214" cy="531" rx="11.7" ry="6.5" fill="#d6eef0"/>
<ellipse cx="234" cy="539" rx="14.3" ry="6.5" fill="#d6eef0"/>
<ellipse cx="254" cy="541" rx="11.7" ry="6.5" fill="#b2e0ee"/>
<ellipse cx="250" cy="581" rx="16.9" ry="9.1" fill="#d6eef0"/>
<ellipse cx="276" cy="586" rx="9.1" ry="5.2" fill="#d6eef0"/>
<ellipse cx="286" cy="560" rx="7.8" ry="11.7" fill="#b2e0ee"/>
<ellipse cx="262" cy="526" rx="5.2" ry="3.9" fill="#1c9adf"/>
<ellipse cx="262" cy="546" rx="15.6" ry="9.1" fill="#d6eef0"/>
<ellipse cx="252" cy="566" rx="20.8" ry="14.3" fill="#d6eef0"/>
<ellipse cx="280" cy="553" rx="11.7" ry="7.8" fill="#d6eef0"/>
<ellipse cx="236" cy="578" rx="11.7" ry="15.6" fill="#d6eef0"/>
<ellipse cx="272" cy="578" rx="7.8" ry="6.5" fill="#b2e0ee"/>
<ellipse cx="244" cy="552" rx="10.4" ry="6.5" fill="#d6eef0"/>
<ellipse cx="290" cy="541" rx="7.8" ry="5.2" fill="#b2e0ee"/>
<ellipse cx="232" cy="558" rx="7.8" ry="7.8" fill="#b2e0ee"/>
<ellipse cx="216" cy="548" rx="10.4" ry="6.5" fill="#b2e0ee"/>
<ellipse cx="200" cy="536" rx="7.8" ry="5.2" fill="#80cce9"/>
<ellipse cx="192" cy="536" rx="5.2" ry="3.9" fill="#42b2e3"/>
<ellipse cx="208" cy="554" rx="6.5" ry="5.2" fill="#b2e0ee"/>
<ellipse cx="196" cy="552" rx="10.4" ry="6.5" fill="#b2e0ee"/>
<ellipse cx="180" cy="548" rx="7.8" ry="5.2" fill="#1c9adf"/>
<ellipse cx="188" cy="558" rx="6.5" ry="3.9" fill="#80cce9"/>
<ellipse cx="178" cy="568" rx="11.7" ry="5.2" fill="#42b2e3"/>
<ellipse cx="186" cy="568" rx="5.2" ry="3.9" fill="#80cce9"/>
<ellipse cx="159" cy="574" rx="9.1" ry="7.8" fill="#80cce9"/>
<ellipse cx="160" cy="576" rx="5.2" ry="5.2" fill="#1c9adf"/>
<ellipse cx="170" cy="580" rx="6.5" ry="5.2" fill="#b2e0ee"/>
<ellipse cx="185" cy="581" rx="10.4" ry="5.2" fill="#d6eef0"/>
<ellipse cx="197" cy="580" rx="6.5" ry="5.2" fill="#d6eef0"/>
<ellipse cx="213" cy="571" rx="10.4" ry="7.8" fill="#fff27e"/>
<ellipse cx="206" cy="566" rx="5.2" ry="3.9" fill="#f1f3c4"/>
<ellipse cx="206" cy="588" rx="10.4" ry="5.2" fill="#fff27e"/>
<ellipse cx="215" cy="589" rx="6.5" ry="3.9" fill="#f1f3c4"/>
<ellipse cx="193" cy="586" rx="7.8" ry="5.2" fill="#f1f3c4"/>
<ellipse cx="182" cy="588" rx="5.2" ry="3.9" fill="#d6eef0"/>
<ellipse cx="150" cy="600" rx="7.8" ry="6.5" fill="#d6eef0"/>
<ellipse cx="160" cy="600" rx="10.4" ry="5.2" fill="#f1f3c4"/>
<ellipse cx="152" cy="608" rx="9.1" ry="6.5" fill="#fff27e"/>
<ellipse cx="172" cy="601" rx="10.4" ry="5.2" fill="#f1f3c4"/>
<ellipse cx="190" cy="607" rx="18.2" ry="11.7" fill="#fff27e"/>
<ellipse cx="207" cy="604" rx="10.4" ry="7.8" fill="#f1f3c4"/>
<ellipse cx="215" cy="600" rx="6.5" ry="5.2" fill="#d6eef0"/>
<ellipse cx="186" cy="616" rx="7.8" ry="5.2" fill="#fff27e"/>
<ellipse cx="283" cy="540.5" rx="3.4" ry="2.9" fill="#f1f3c4"/>
<ellipse cx="313.5" cy="400.5" rx="3.6" ry="4.2" fill="#fff27e"/>
<ellipse cx="318" cy="566" rx="22.1" ry="27.3" fill="#2a82d2"/>
<ellipse cx="320" cy="574" rx="7.8" ry="9.1" fill="#3a64b8"/>
<ellipse cx="270" cy="528" rx="11.7" ry="9.1" fill="#d6eef0"/>
<ellipse cx="286" cy="534" rx="10.4" ry="6.5" fill="#d6eef0"/>
<ellipse cx="296" cy="528" rx="6.5" ry="5.2" fill="#b2e0ee"/>
<ellipse cx="312" cy="548" rx="10.4" ry="10.4" fill="#1c9adf"/>
<ellipse cx="309.5" cy="532.5" rx="5.2" ry="5.2" fill="#47409a"/>
<ellipse cx="286" cy="574" rx="11.7" ry="10.4" fill="#1c9adf"/>
<ellipse cx="298" cy="596" rx="10.4" ry="10.4" fill="#1c9adf"/>
<ellipse cx="330" cy="598" rx="11.7" ry="10.4" fill="#1c9adf"/>
<ellipse cx="340" cy="532" rx="5.2" ry="5.2" fill="#1c9adf"/>
<ellipse cx="336" cy="602" rx="5.2" ry="5.2" fill="#2a82d2"/>
<ellipse cx="300" cy="548" rx="7.8" ry="7.8" fill="#42b2e3"/>
<ellipse cx="345" cy="548" rx="7.8" ry="13.0" fill="#42b2e3"/>
<ellipse cx="352" cy="566" rx="7.8" ry="13.0" fill="#80cce9"/>
<ellipse cx="346" cy="590" rx="7.8" ry="10.4" fill="#42b2e3"/>
<ellipse cx="322" cy="606" rx="10.4" ry="5.2" fill="#1c9adf"/>
<ellipse cx="268" cy="584" rx="5.2" ry="5.2" fill="#80cce9"/>
<ellipse cx="384" cy="582" rx="14.3" ry="20.8" fill="#b2e0ee"/>
<ellipse cx="388" cy="590" rx="7.8" ry="10.4" fill="#d6eef0"/>
<ellipse cx="380" cy="556" rx="9.1" ry="11.7" fill="#b2e0ee"/>
<ellipse cx="371" cy="598" rx="9.1" ry="10.4" fill="#b2e0ee"/>
<ellipse cx="392" cy="604" rx="6.5" ry="10.4" fill="#b2e0ee"/>
<ellipse cx="386" cy="622" rx="7.8" ry="6.5" fill="#b2e0ee"/>
<ellipse cx="372" cy="634" rx="7.8" ry="6.5" fill="#b2e0ee"/>
<ellipse cx="364" cy="622" rx="6.5" ry="6.5" fill="#80cce9"/>
<ellipse cx="362" cy="560" rx="6.5" ry="10.4" fill="#80cce9"/>
<ellipse cx="392" cy="570" rx="5.2" ry="7.8" fill="#b2e0ee"/>
<ellipse cx="395" cy="541" rx="9.1" ry="9.1" fill="#42b2e3"/>
<ellipse cx="392" cy="531" rx="9.1" ry="5.2" fill="#1c9adf"/>
<ellipse cx="382" cy="540" rx="6.5" ry="6.5" fill="#42b2e3"/>
<ellipse cx="367" cy="662" rx="18.2" ry="16.9" fill="#2a82d2"/>
<ellipse cx="365" cy="656" rx="9.1" ry="10.4" fill="#3a64b8"/>
<ellipse cx="362" cy="677" rx="10.4" ry="7.8" fill="#1c9adf"/>
<ellipse cx="380" cy="664" rx="7.8" ry="10.4" fill="#1c9adf"/>
<ellipse cx="354" cy="672" rx="6.5" ry="7.8" fill="#1c9adf"/>
<ellipse cx="378" cy="680" rx="6.5" ry="5.2" fill="#80cce9"/>
</g>
<g filter="url(#bl2)"><polygon points="302.3,452.8 310.8,446.2 324.1,436.8 331.6,429.2 341.1,423.5 347,422.6 364.1,424.5 366.9,432 364.1,442.4 352.7,451.9 341.4,459.5 335.7,468.9 326,469.9 314.6,463.3 304.2,459.5" fill="#bfe4ec" fill-opacity=".62"/><polygon points="343.2,396.1 348.9,387.6 354.6,387.6 366,397 373.5,404.6 375.4,412.2 372,417 364.1,420.6 348.9,420.4 343.2,415" fill="#c4e6ec" fill-opacity=".62"/></g>
<g filter="url(#bl2)"><polygon points="458.7,444.3 458.7,455.7 447.3,468.9 437.9,480.3 436.9,491.6 445.4,489.7 453.9,488.8 452,480.3 454.9,470.8 463.4,459.5 468.1,446.2 465.3,439.6 462.5,442.4" fill="#3579cd" fill-opacity=".8"/><polygon points="468.1,446.2 463.4,459.5 454.9,470.8 452,480.3 454.9,488.8 462.5,478.4 472.9,471.8 469.1,463.3 472.9,452.8" fill="#4a46a2"/></g>
</g>
<polyline points="206.2,528.4 215.7,535 225.1,541 234.6,547.2 246,552.2 257.3,548.6 262,544" fill="none" stroke="#c6cff0" stroke-width="2.3" stroke-linejoin="round"/>
<polyline points="187,541.5 196,541 204,544.5 212,553 219,558 228,556" fill="none" stroke="#c6cff0" stroke-width="2.3" stroke-linejoin="round"/>
<polyline points="296,459 303,460.8 314.1,465.1 325.8,471.5 336.8,469.9 342.7,460.4 353.8,452.9 365.2,443.3 368.4,432.1 365.9,424.2" fill="none" stroke="#c6cff0" stroke-width="2.3" stroke-linejoin="round"/>
<ellipse cx="304" cy="449" rx="2" ry="1.2" fill="#cfd8f4"/>
<ellipse cx="263" cy="472" rx="2.6" ry="1.4" fill="#cfd8f4"/>
<ellipse cx="250" cy="476" rx="2.4" ry="1.2" fill="#cfd8f4"/>
<ellipse cx="287" cy="474" rx="2" ry="2.4" fill="#cfd8f4"/>
<ellipse cx="296" cy="477" rx="2.2" ry="3.2" fill="#cfd8f4"/>
<ellipse cx="269" cy="489" rx="2.6" ry="1.5" fill="#cfd8f4"/>
<ellipse cx="264" cy="502" rx="2" ry="1.6" fill="#cfd8f4"/>
<ellipse cx="433" cy="345.5" rx="1.4" ry="2" fill="#cfd8f4"/>
<ellipse cx="360.5" cy="379" rx="3.6" ry="2.4" fill="#cfd8f4"/>
<path d="M331 377.5 L337 372 L345 369.5 L346 371.5 L340 374.5 L334 379.5Z M344 374 L348.5 373 L347 377 L343.5 377Z M354 358 L357 356.5 L358 362 L354 363Z M356.5 376.5 L364.5 376.2 L364 381.8 L356 381.6Z M392 307 L395 306.5 L394.5 313 L392.5 313Z" fill="#d4dcf4"/>
<path d="M310 400.2 H315.6 V408.4 H311.6 V405 H310Z" fill="#fbe67c" clip-path="url(#nl)"/>
<polygon points="268.4,369.5 274,370.4 275,375.2 287.3,376.1 293.9,373.3 297.6,380 300.5,387.5 302.4,398.8 310.8,398.9 316.5,401.8 315.6,408.4 310.8,411.2 307,416.9 301.4,419.7 299.5,416 292.9,417.8 293.8,427.3 298.5,434.9 296.6,440.5 291.9,440.5 296.6,445.3 293.8,451 288.1,454.7 293.8,458.5 302,461.8 313.6,466.6 325.5,472.8 337.8,470.6 344,461 354.8,453.6 366.3,444 369.8,432 367.3,423.5 372.5,421.4 379.5,418 381.4,415.2 379,413.6 374.5,416.4 369,419.4 364.1,420.6 348.9,420.4 343.2,415 343.2,396.1 348.9,387.6 354.6,387.6 355.4,386.5 346,385.6 340.3,388.4 322.3,379.9 326.1,376.1 327,364.7 324.2,353.4 327,340.1 338.4,326 351.6,316.5 363,310.8 378.1,306.5 391.4,304.6 400.8,304.6 406.5,305.1 411.4,303.2 422.7,300.4 436,295.7 450.1,298.9 452,309.9 458.7,316.5 470,319.3 472.8,326 481.4,328.8 483.3,336.4 481.4,345.8 483.3,361 481.4,370.4 475.7,379.9 471.9,387.5 471,405 471,414.1 462.5,414.1 453,413.1 443.5,415 441.6,420.7 444.5,425.4 438.8,428.2 441.6,437.7 451.1,441.5 462.5,442.4 465.3,439.6 468.1,447.2 472.9,452.8 469.1,463.3 472.9,471.8 462.5,478.4 453.9,488.8 445.4,489.7 444.5,496.4 440.7,500.2 447.3,503 453,510.6 449.5,518.5 440,520.4 430.6,524.2 423,528 415.4,530.8 411.6,527 398.4,526.1 392.7,522.3 388.9,528 375.7,534.6 377.6,546 383.3,548.8 382.3,554.5 388.9,557.3 388.9,563.9 398.4,576.2 399.3,593.3 399.3,598.9 387.6,616.9 386.2,621.9 388.3,625.4 391.8,624.7 396.8,624 396,628.2 390.4,631.8 379.1,642.4 377,645.9 373.4,642.4 370.6,645.2 372.7,648 373.4,655.1 376.3,653.7 382.6,653 383.3,659.3 388.3,662.1 386.9,672 379.1,677 377.7,680.5 382.6,681.9 383.3,684.7 379.1,684 376.3,686.2 370.6,684 365.7,684.7 360.7,682.6 356.5,683.3 352.3,685.5 353,679.1 349.4,677 348,669.9 353,665 358.6,652.3 359.3,645.2 365,637.4 362.1,636.7 366.4,629.7 360.7,629.7 359.3,624.7 355.1,626.1 346.6,619.8 341,618.4 335.3,607.8 326.8,612 311.2,613.1 310.3,606.5 302.7,604.6 297,584.7 291.4,583.8 283.8,593.3 270.6,591.4 275.3,589.5 275.3,581 268.7,580 261.1,588.5 248.8,588.5 248.8,581.9 242.2,581.9 234.6,587.6 238.4,596.1 230.8,598.9 223.3,595.1 225.5,588 226.5,580 224.8,572 226.5,565 232.7,557.3 219.5,560.1 211.9,556.4 202.4,542.2 191.1,540.3 187.3,533.7 200.5,528.9 206.2,528 205.8,521.9 201.1,516.2 203.9,507.7 208.7,510.6 221.9,497.3 235.1,480.3 246.5,459.5 253.1,442.4 257.9,417.8 260.7,398.9 264.6,383.7" fill="none" stroke="#50687c" stroke-width=".9" stroke-linejoin="round" stroke-opacity=".85"/>
<polygon points="302.3,452.8 310.8,446.2 324.1,436.8 331.6,429.2 341.1,423.5 347,422.6 364.1,424.5 366.9,432 364.1,442.4 352.7,451.9 341.4,459.5 335.7,468.9 326,469.9 314.6,463.3 304.2,459.5" fill="none" stroke="#60708a" stroke-width=".9" stroke-linejoin="round" stroke-opacity=".85"/>
<polygon points="278.8,336.7 282,341.1 283.9,347.7 282,355.3 276.9,361.9 268.4,367 265.5,361.9 268.4,353.4 273.1,343.9" fill="none" stroke="#6b86a8" stroke-width=".8" stroke-linejoin="round" stroke-opacity=".85"/>
<polygon points="279.7,332.2 289.2,325.4 299.6,319.3 300.9,321.6 293,327.8 285,334.1" fill="none" stroke="#6b86a8" stroke-width=".8" stroke-linejoin="round" stroke-opacity=".85"/>
<polygon points="304.3,311.8 319.5,304.6 339.3,299.1 339.9,301.9 334.6,304.6 323.3,309.5 306.2,316.7 304,314" fill="none" stroke="#6b86a8" stroke-width=".8" stroke-linejoin="round" stroke-opacity=".85"/>
<polygon points="344.1,298.1 353.5,297 375.3,295.9 374.7,298.9 361.1,301.9 348.8,304.2 344.4,301.9" fill="none" stroke="#6b86a8" stroke-width=".8" stroke-linejoin="round" stroke-opacity=".85"/>
<polygon points="386.1,295.1 395.2,292.5 406.1,290.2 406.1,292.1 398,295.7 389.5,299.3 386.1,298.1" fill="none" stroke="#6b86a8" stroke-width=".8" stroke-linejoin="round" stroke-opacity=".85"/>
<polygon points="414,283.6 419.8,284 418.6,287.2 415,286.6" fill="none" stroke="#6b86a8" stroke-width=".8" stroke-linejoin="round" stroke-opacity=".85"/>
<polygon points="424.5,283.6 429.4,283.4 427.6,285.6" fill="none" stroke="#6b86a8" stroke-width=".8" stroke-linejoin="round" stroke-opacity=".85"/>
<polygon points="258.4,368.6 263.6,367.4 264,369.2 259,370.4" fill="none" stroke="#6b86a8" stroke-width=".8" stroke-linejoin="round" stroke-opacity=".85"/>
<polygon points="173.1,545 185.4,542.2 196.8,546 204.3,553.5 208.1,560.1 196.8,563 189.2,555.4 176,554.5" fill="none" stroke="#6b86a8" stroke-width=".8" stroke-linejoin="round" stroke-opacity=".85"/>
<polygon points="168.4,565.8 187.3,563 191.1,570.5 177.8,573.4 171.2,570.5" fill="none" stroke="#6b86a8" stroke-width=".8" stroke-linejoin="round" stroke-opacity=".85"/>
<polygon points="200.5,565.8 217.6,563.9 222.3,570.5 220.4,578.1 210,575.3" fill="none" stroke="#6b86a8" stroke-width=".8" stroke-linejoin="round" stroke-opacity=".85"/>
<polygon points="150.4,571.5 164.6,563.9 174.1,574.3 196.8,575.3 204.3,581.9 215.7,584.7 223.3,581.9 225.1,585.7 219.5,590.4 208.1,589.5 196.8,584.7 187.3,593.3 177.8,587.6 172.2,581.9 162.7,584.7 154.2,577.2" fill="none" stroke="#6b86a8" stroke-width=".8" stroke-linejoin="round" stroke-opacity=".85"/>
<polygon points="143.8,595.1 157,591.4 172.2,595.1 183.5,600.8 196.8,595.1 200.5,593.3 210,600.8 217.6,597 223.3,595.1 215.7,604.6 202.4,615 194.9,618.8 189.2,619.7 181.6,618.8 180.7,612.2 162.7,606.5 158,613.1 148.5,613.1 143.8,602.7" fill="none" stroke="#6b86a8" stroke-width=".8" stroke-linejoin="round" stroke-opacity=".85"/>
<polyline points="400.8,304.6 396.1,309.9 400.8,311.8 402.7,317.4 397,328.8 393.3,338.3 395.2,345.8 406.5,351.5 414.1,364.7 412.2,373.3 400.8,374.2 389.5,385.6 380,389.3 368.7,391.2 355.4,386.5" fill="none" stroke="#4c5c66" stroke-width=".85" stroke-linejoin="round" stroke-opacity=".8"/>
<polyline points="406.5,351.5 410.3,342 417.9,335.4 425.4,337.3 431.1,343.9 437.8,345.8 449.2,355.3 462.4,370.4 471,383.7" fill="none" stroke="#4c5c66" stroke-width=".85" stroke-linejoin="round" stroke-opacity=".8"/>
<polyline points="354.6,387.6 360.3,392.3 366,397 373.5,404.6 375.4,412.2 380.1,415 375.4,418.8 364.1,421.6" fill="none" stroke="#4c5c66" stroke-width=".85" stroke-linejoin="round" stroke-opacity=".8"/>
<polyline points="360.3,392.3 375.4,387.6 388.7,385.7 395.3,380 389.5,385.6" fill="none" stroke="#4c5c66" stroke-width=".85" stroke-linejoin="round" stroke-opacity=".8"/>
<polyline points="388.7,385.7 395.3,393.2 389.6,398.9 392.4,408.4 405.7,411.2 411.4,417.8 422.7,418.8 424.6,413.1 432.2,410.3 439.7,413.1 443.5,415" fill="none" stroke="#4c5c66" stroke-width=".85" stroke-linejoin="round" stroke-opacity=".8"/>
<polyline points="366.9,432 370.7,436.8 380.1,434.9 386.8,440.5 389.6,450 384.9,457.6 388.7,467 392.4,473.7 405.7,473.7 415.1,471.8 422.7,480.3 436,483.1 436.9,488.8 445.4,489.7" fill="none" stroke="#4c5c66" stroke-width=".85" stroke-linejoin="round" stroke-opacity=".8"/>
<polyline points="246.5,459.5 256,462.3 252.2,474.6 259.7,476.5 271.1,473.7 280.6,470.8 288.1,466.1 293.8,464.2 296.6,467 293.8,480.3 299.5,483.1 308.9,481.2 314.6,466.1" fill="none" stroke="#4c5c66" stroke-width=".85" stroke-linejoin="round" stroke-opacity=".8"/>
<polyline points="273,474.6 280.6,483.1 273,489.7 275.8,497.3 274.9,506.8 282.5,514.3 290,523.8 295.7,526.6" fill="none" stroke="#4c5c66" stroke-width=".85" stroke-linejoin="round" stroke-opacity=".8"/>
<polyline points="326,471.8 329.8,482.2 336.4,487.9 331.6,495.4 339.2,493.5 341.1,503 345.8,512.5 339.2,510.6 324.1,512.5 308.9,511.5 301.4,520 295.7,526.6 291.4,527" fill="none" stroke="#4c5c66" stroke-width=".85" stroke-linejoin="round" stroke-opacity=".8"/>
<polyline points="234.6,547.8 246,552.6 257.3,548.8 268.7,538.4 283.8,531.8 293.3,534.6 302.7,544.1 314.1,545 325.4,534.6 334.9,532.7 345.4,534.6 358.7,543.1 368.1,541.2 375.7,547.8" fill="none" stroke="#4c5c66" stroke-width=".85" stroke-linejoin="round" stroke-opacity=".8"/>
<polyline points="276.2,510 283.8,513.8 291.4,527 302.7,519.5 310.3,511.9" fill="none" stroke="#4c5c66" stroke-width=".85" stroke-linejoin="round" stroke-opacity=".8"/>
<polyline points="375.7,547.8 381.4,561.1 383.3,570.5 365.3,570.5 367.2,583.8 372.8,596.1 349.2,606.5 345.4,613.1 346.6,619.8" fill="none" stroke="#4c5c66" stroke-width=".85" stroke-linejoin="round" stroke-opacity=".8"/>
<polyline points="293.9,373.3 318.5,353.8 324.2,352.4" fill="none" stroke="#6f9cf0" stroke-width=".9"/>
<polyline points="316.5,408.4 324.1,413.1 329.8,419.7 332.6,426.4 327.9,432" fill="none" stroke="#8ab4f4" stroke-width=".9"/>
<path d="M338.4,326 L344,333 L352,337.5 L358,337 L363,326 L362.5,311.5" fill="none" stroke="#0a1cf0" stroke-width=".95" stroke-linejoin="round"/>
<path d="M327,345 L335,348 L345,349 L352,353 L355.5,360 L353.5,369 L349,375.5 L343,376.5 L337,370 L332,358 L330.5,350" fill="none" stroke="#0a1cf0" stroke-width=".95" stroke-linejoin="round"/>
<path d="M325,353 L327.5,358 L326,362" fill="none" stroke="#0a1cf0" stroke-width=".95" stroke-linejoin="round"/>
<path d="M275,382 L278.5,378 L284.5,378 L286,384 L282.5,392 L277.5,388 Z" fill="none" stroke="#0a1cf0" stroke-width=".95" stroke-linejoin="round"/>
<path d="M264,383 L268,386.5 L264.5,389" fill="none" stroke="#0a1cf0" stroke-width=".95" stroke-linejoin="round"/>
<path d="M259,407 L263,404.5 L267.5,407 L267,412.5 L259.5,414.5" fill="none" stroke="#0a1cf0" stroke-width=".95" stroke-linejoin="round"/>
<path d="M371.6,340 L374,343" fill="none" stroke="#0a1cf0" stroke-width=".95" stroke-linejoin="round"/>
<path d="M423.5,352 L429,346.5 L434,349 L435.5,356.5 L430,361.5 L425.5,360 Z" fill="none" stroke="#0a1cf0" stroke-width=".95" stroke-linejoin="round"/>
<path d="M446,357 L451.5,354.5 L457,361 L460.5,368 L455,370.5 L448,367.5 L445.5,362 Z" fill="none" stroke="#0a1cf0" stroke-width=".95" stroke-linejoin="round"/>
<path d="M466,378 L470,380.5 L469,384" fill="none" stroke="#0a1cf0" stroke-width=".95" stroke-linejoin="round"/>
<path d="M406,447 L411,444.5 L418,444.5 L423.5,449 L423,454.5 L417,457.5 L410,457.8 L406.5,453.5 Z" fill="none" stroke="#0a1cf0" stroke-width=".95" stroke-linejoin="round"/>
<path d="M380,452 L381.5,447.5 L384.5,452.5 Z" fill="none" stroke="#0a1cf0" stroke-width=".95" stroke-linejoin="round"/>
<path d="M403.8,491.6 L425.6,491.6 L418.9,508.7 L407.6,527.6 M403.8,491.6 L390.5,510.6 L386.8,527.6" fill="none" stroke="#0a1cf0" stroke-width=".95" stroke-linejoin="round"/>
<path d="M458.7,444.3 L458.7,455.7 L447.3,468.9 L437.9,480.3 L436.9,491.6 L441.6,496.4" fill="none" stroke="#0a1cf0" stroke-width=".95" stroke-linejoin="round"/>
<path d="M468.1,446.2 L463.4,459.5 L454.9,470.8 L452,480.3 L454.9,488.8" fill="none" stroke="#0a1cf0" stroke-width=".95" stroke-linejoin="round"/>
<path d="M437.5,509.5 L440,508" fill="none" stroke="#0a1cf0" stroke-width=".95" stroke-linejoin="round"/>
<path d="M300,555.4 L315.1,550.7 L318,543.1 L308.5,538.4 L307.6,530.8 L313.2,526.1 L328.4,534.6 L333.1,534.6 L335,544.1 L338.8,553.5 L336,572.4 L331.2,587.6 L326.5,590.4 L315.1,584.7 L303.8,574.3 L299,564.9 Z" fill="none" stroke="#0a1cf0" stroke-width=".95" stroke-linejoin="round"/>
<path d="M336,529.5 L339.7,527.6 L343.5,529.5 L343,534.5 L337.5,536 Z" fill="none" stroke="#0a1cf0" stroke-width=".95" stroke-linejoin="round"/>
<path d="M277.5,571 L282,567 L289,566.5 L294,570 L293.5,577 L288,581 L281,581 L277.5,577 Z" fill="none" stroke="#0a1cf0" stroke-width=".95" stroke-linejoin="round"/>
<path d="M332,599.5 L336,596.5 L340,600 L339.5,605 L336,607.5 L332,604.5 Z" fill="none" stroke="#0a1cf0" stroke-width=".95" stroke-linejoin="round"/>
<path d="M353,665 L359,671.5 L366,677 L378,672.5 L386.9,669" fill="none" stroke="#0a1cf0" stroke-width=".95" stroke-linejoin="round"/>
<path d="M363,658.5 L365.5,655.5 L367.5,657.5 L365.5,661.5 Z" fill="none" stroke="#0a1cf0" stroke-width=".95" stroke-linejoin="round"/>
<path d="M360.5,646 L364,645.5" fill="none" stroke="#0a1cf0" stroke-width=".95" stroke-linejoin="round"/>
<path d="M223,505.5 L224.8,501.5 L224.2,506.5" fill="none" stroke="#0a1cf0" stroke-width=".95" stroke-linejoin="round"/>
<path d="M185.5,548.5 L187,551.5" fill="none" stroke="#0a1cf0" stroke-width=".95" stroke-linejoin="round"/>
<path d="M307.8 534.6 L309.8 530.6 L312 534.4Z" fill="#4a44b8" stroke="#2a2ae0" stroke-width=".6"/>
<path d="M473.2 357.8 l1.5 -1.1" stroke="#ff3030" stroke-width=".9"/><path d="M207.4 587.4 l1.8 -1.2 l-.3 1.5z" fill="#e02020"/><circle cx="267.6" cy="571.4" r=".5" fill="#c02020"/>
<path d="M443.1 340.4 C441.4 333.4 433.9 326.4 433.9 318.2 A9.2 9.2 0 0 1 452.3 318.2 C452.3 326.4 444.8 333.4 443.1 340.4Z" fill="#9292fb" stroke="#5d5dd8" stroke-width=".9"/><circle cx="443.1" cy="318.6" r="4.7" fill="#fff"/><circle cx="443.1" cy="341" r="2.1" fill="#000"/>
<rect x="527.6" y="262.6" width="36.2" height="36.8" rx="3" fill="#01689b" stroke="#51788f" stroke-width=".8"/><rect x="566" y="262.6" width="36.2" height="36.8" rx="3" fill="#01689b" stroke="#51788f" stroke-width=".8"/>
<rect x="539" y="278" width="13.4" height="3.2" fill="#fff"/><rect x="577.4" y="278" width="13.6" height="3.2" fill="#fff"/><rect x="582.6" y="272.8" width="3.2" height="13.6" fill="#fff"/>
<rect x="543.5" y="514.5" width="69" height="182.4" fill="#fff" fill-opacity=".5" stroke="#9a9a9a" stroke-width=".8"/>
<path d="M555.5 518.2 L563.6 533.6 V658 L555.5 674.4 L547.4 658 V533.6Z" fill="url(#lg)" stroke="#222" stroke-width=".5"/>
<path d="M563.6 532.8 H569.6" stroke="#111" stroke-width=".9"/>
<text x="575.2" y="536.4" font-family="Liberation Sans, sans-serif" font-weight="bold" font-size="13.8" fill="#111" textLength="24.6" lengthAdjust="spacingAndGlyphs">2.00</text>
<path d="M563.6 548.7 H569.6" stroke="#111" stroke-width=".9"/>
<text x="575.2" y="552.3" font-family="Liberation Sans, sans-serif" font-weight="bold" font-size="13.8" fill="#111" textLength="24.6" lengthAdjust="spacingAndGlyphs">1.50</text>
<path d="M563.6 563.8 H569.6" stroke="#111" stroke-width=".9"/>
<text x="575.2" y="567.4" font-family="Liberation Sans, sans-serif" font-weight="bold" font-size="13.8" fill="#111" textLength="24.6" lengthAdjust="spacingAndGlyphs">1.00</text>
<path d="M563.6 579.9 H569.6" stroke="#111" stroke-width=".9"/>
<text x="575.2" y="583.5" font-family="Liberation Sans, sans-serif" font-weight="bold" font-size="13.8" fill="#111" textLength="24.6" lengthAdjust="spacingAndGlyphs">0.50</text>
<path d="M563.6 595 H569.6" stroke="#111" stroke-width=".9"/>
<text x="575.2" y="598.6" font-family="Liberation Sans, sans-serif" font-weight="bold" font-size="13.8" fill="#111" textLength="24.6" lengthAdjust="spacingAndGlyphs">0.00</text>
<path d="M563.6 610 H569.6" stroke="#111" stroke-width=".9"/>
<text x="575.0" y="613.6" font-family="Liberation Sans, sans-serif" font-weight="bold" font-size="13.8" fill="#111" textLength="29.3" lengthAdjust="spacingAndGlyphs">-0.50</text>
<path d="M563.6 625.4 H569.6" stroke="#111" stroke-width=".9"/>
<text x="575.0" y="629.0" font-family="Liberation Sans, sans-serif" font-weight="bold" font-size="13.8" fill="#111" textLength="29.3" lengthAdjust="spacingAndGlyphs">-1.00</text>
<path d="M563.6 640.8 H569.6" stroke="#111" stroke-width=".9"/>
<text x="575.0" y="644.4" font-family="Liberation Sans, sans-serif" font-weight="bold" font-size="13.8" fill="#111" textLength="29.3" lengthAdjust="spacingAndGlyphs">-1.50</text>
<path d="M563.6 657.2 H569.6" stroke="#111" stroke-width=".9"/>
<text x="575.0" y="660.8" font-family="Liberation Sans, sans-serif" font-weight="bold" font-size="13.8" fill="#111" textLength="29.3" lengthAdjust="spacingAndGlyphs">-2.00</text>
<rect x="549.6" y="687.2" width="2.6" height="1.1" fill="#222"/>
<rect x="30.3" y="705.7" width="65.8" height="2" fill="#000"/><path d="M30.8 699.2 V706 M95.6 699.2 V706" stroke="#000" stroke-width="1"/><path d="M36.4 702 V706 M42.4 702 V706 M48.4 702 V706 M54.5 702 V706" stroke="#000" stroke-width="1"/><path d="M62.4 700.3 V706" stroke="#000" stroke-width="1.1"/>
<text x="30" y="700.2" text-anchor="middle" font-family="Liberation Sans, sans-serif" font-size="8.6" fill="#000">0</text>
<text x="62.8" y="700.2" text-anchor="middle" font-family="Liberation Sans, sans-serif" font-size="8.6" fill="#000">25</text>
<text x="94.6" y="700.2" text-anchor="middle" font-family="Liberation Sans, sans-serif" font-size="8.6" fill="#000">50</text>
<text x="104.8" y="706.4" font-family="Liberation Sans, sans-serif" font-size="8.6" fill="#000">km</text>
</svg>
<div class="card" style="left:634px;top:252px;width:1199px;height:219.5px"></div>
<svg class="abs" style="left:634px;top:252px" width="1199" height="220" viewBox="634 252 1199 220">
<text x="1233.3" y="270" text-anchor="middle" font-family="Liberation Sans, sans-serif" font-size="16" fill="#111">SPI 6 mnd - Lokatie op de kaart</text>
<rect x="708" y="283" width="1110" height="140" fill="#f0f0f0"/>
<rect x="708" y="282.5" width="1110" height="1.4" fill="#dedede"/>
<path d="M708.5 291.3 H1818" stroke="#4d4d9f" stroke-width="2.1"/>
<path d="M708.5 307.5 H1818" stroke="#4d4d9f" stroke-width="2.1"/>
<path d="M708.5 323.5 H1818" stroke="#12a1dd" stroke-width="2.2"/>
<path d="M708.5 355.7 H1818" stroke="#d3eeee" stroke-width="1.2"/>
<path d="M708.5 387.6 H1818" stroke="#fdae61" stroke-width="2.0"/>
<path d="M708.5 403.8 H1818" stroke="#f15a24" stroke-width="2.0"/>
<path d="M708.5 420.2 H1818" stroke="#a81c30" stroke-width="2.2"/>
<rect x="707.4" y="283" width="1.8" height="140.6" fill="#aaa"/>
<rect x="707.4" y="422.4" width="1110.6" height="1.5" fill="#b4b4b4"/>
<text x="703.6" y="294.9" text-anchor="end" font-family="Liberation Sans, sans-serif" font-size="10" fill="#111">Extreem nat</text>
<text x="703.6" y="311.1" text-anchor="end" font-family="Liberation Sans, sans-serif" font-size="10" fill="#111">Zeer nat</text>
<text x="703.6" y="327.1" text-anchor="end" font-family="Liberation Sans, sans-serif" font-size="10" fill="#111">Vrij nat</text>
<text x="703.6" y="359.3" text-anchor="end" font-family="Liberation Sans, sans-serif" font-size="10" fill="#111">Normaal</text>
<text x="703.6" y="391.2" text-anchor="end" font-family="Liberation Sans, sans-serif" font-size="10" fill="#111">Vrij droog</text>
<text x="703.6" y="407.4" text-anchor="end" font-family="Liberation Sans, sans-serif" font-size="10" fill="#111">Zeer droog</text>
<text x="703.6" y="423.8" text-anchor="end" font-family="Liberation Sans, sans-serif" font-size="10" fill="#111">Extreem droog</text>
<path d="M765.1 423.5 V428.5" stroke="#777" stroke-width="1"/>
<text x="765.1" y="440" text-anchor="middle" font-family="Liberation Serif, serif" font-weight="bold" font-size="12" fill="#555">jul. 24</text>
<path d="M939.8 423.5 V428.5" stroke="#777" stroke-width="1"/>
<text x="939.8" y="440" text-anchor="middle" font-family="Liberation Serif, serif" font-weight="bold" font-size="12" fill="#555">aug. 24</text>
<path d="M1114.4 423.5 V428.5" stroke="#777" stroke-width="1"/>
<text x="1114.4" y="440" text-anchor="middle" font-family="Liberation Serif, serif" font-weight="bold" font-size="12" fill="#555">sep. 24</text>
<path d="M1283 423.5 V428.5" stroke="#777" stroke-width="1"/>
<text x="1283" y="440" text-anchor="middle" font-family="Liberation Serif, serif" font-weight="bold" font-size="12" fill="#555">okt. 24</text>
<path d="M1457.3 423.5 V428.5" stroke="#777" stroke-width="1"/>
<text x="1457.3" y="440" text-anchor="middle" font-family="Liberation Serif, serif" font-weight="bold" font-size="12" fill="#555">nov. 24</text>
<path d="M1626.6 423.5 V428.5" stroke="#777" stroke-width="1"/>
<text x="1626.6" y="440" text-anchor="middle" font-family="Liberation Serif, serif" font-weight="bold" font-size="12" fill="#555">dec. 24</text>
<path d="M1800.6 423.5 V428.5" stroke="#777" stroke-width="1"/>
<text x="1818" y="440" text-anchor="end" font-family="Liberation Serif, serif" font-weight="bold" font-size="12" fill="#555">jan. 25</text>
<path d="M1333.8 283.5 V422.5" stroke="#cfcfcf" stroke-width="1.2"/>
<polygon points="1788.6,333.4 1795,330.4 1802.5,330.4 1806.8,328.0 1818,326.6 1818,335.7 1800.3,335.5 1788.6,334.4" fill="#b2b2b2"/>
<polyline points="709.1,288.5 714.4,291.0 720.3,292.1 725.7,293.5 731.5,295.6 736.3,295.6 742.8,294.9 747.6,297.0 753.4,301.7 759.6,309.2 764.7,306.6 770.6,305.8 776.4,308.1 782.3,307.9 788.2,306.6 793.0,304.7 798.3,303.4 804.8,304.2 810.1,300.8 816.0,299.9 821.6,301.7 827.0,288.7 832.5,286.0 837.9,286.3 843.2,286.1 849.1,285.5 855.0,285.9 860.9,287.6 866.8,289.2 872.1,289.5 877.4,288.7 883.3,288.7 889.2,291.0 894.5,292.1 900.7,291.9 911.9,291.9 917.3,293.0 923.1,293.5 928.5,294.0 933.8,294.2 939.7,293.5 951.5,293.5 956.8,296.4 962.5,295.1 968.0,300.2 973.4,300.7 978.7,299.9 984.6,299.4 989.9,299.9 995.8,302.8 1001.7,304.7 1012.7,297.0 1018.8,297.2 1024.5,302.8 1030.0,303.7 1035.4,304.2 1040.9,307.4 1046.6,305.8 1052.5,307.4 1057.8,309.2 1063.4,310.1 1069.4,303.7 1074.9,304.5 1080.8,304.7 1085.9,307.7 1091.8,307.1 1097.1,306.9 1102.4,306.0 1108.3,305.8 1114.2,308.1 1119.6,303.9 1125.4,303.1 1131.1,301.5 1136.7,302.9 1142.5,302.9 1148.4,302.6 1153.8,302.8 1159.3,303.2 1165.0,293.5 1170.6,294.0 1176.2,293.6 1181.5,295.1 1187.4,295.6 1193.3,296.7 1199.2,299.2 1204.5,300.4 1210.2,301.3 1215.8,302.4 1221.3,303.9 1227.0,303.9 1232.9,304.9 1238.2,305.6 1243.5,305.6 1249.4,302.8 1254.8,302.6 1260.6,301.0 1266.0,301.0 1271.9,302.1 1277.5,300.4 1282.8,301.7 1288.7,304.2 1294.6,305.6 1299.9,305.8 1305.8,305.8 1311.2,305.8 1317.0,306.6 1322.4,307.1 1328.3,307.1 1333.8,307.4 1339.5,307.9 1344.8,310.1 1350.7,312.0 1356.4,311.8 1361.9,314.1 1367.8,316.5 1373.2,318.1 1379.0,318.8 1384.6,318.1 1390.3,320.2 1395.9,318.8 1401.7,320.2 1407.4,320.2 1413.2,321.6 1418.6,322.4 1424.5,322.7 1429.8,322.7 1435.2,321.3 1440.5,320.8 1446.4,321.3 1452.3,324.0 1458.1,324.8 1470,325.5 1485,327 1497,328 1502.4,328.0 1508.3,327.7 1513.9,324.7 1519.5,325.9 1525.4,326.6 1531.2,327.0 1536.6,327.4 1542.1,328.2 1547.8,326.1 1553.2,324.0 1559.0,322.9 1564.9,321.8 1570.3,320.8 1575.9,320.2 1581.5,318.8 1587.4,323.8 1592.7,325.9 1598.4,325.0 1603.9,318.1 1609.8,317.8 1615.2,318.0 1621.0,318.0 1626.6,318.8 1632.3,318.1 1638.1,317.3 1643.7,318.3 1649.4,311.9 1655.0,310.6 1660.5,325.6 1666.2,327.0 1671.5,327.2 1677.2,327.7 1682.8,332.0 1688.1,333.6 1694.0,335.7 1699.9,335.5 1705.4,335.2 1711.1,335.2 1717.0,335.1 1722.3,333.4 1727.7,331.4 1733.5,330.9 1739.2,330.2" fill="none" stroke="#000" stroke-width="2.2" stroke-linejoin="round" stroke-linecap="round"/>
<polyline points="1739.2,330.2 1745.3,328.8 1751.2,328.0 1757.6,327.4 1764.0,327.7 1770.4,328.0 1773.6,328.5 1776.8,330.2 1783.2,331.2 1789.1,333.4 1795.0,333.1 1800.3,333.6 1806.8,333.4 1812.1,334.1 1818,332.5" fill="none" stroke="#000" stroke-width="2.3" stroke-dasharray="3.2 3.2" stroke-linejoin="round"/>
<circle cx="1333.8" cy="307.4" r="4.2" fill="#fff"/><circle cx="1333.8" cy="307.4" r="3" fill="#000"/>
<circle cx="1739.2" cy="330.2" r="3.9" fill="#fff" stroke="#000" stroke-width="1.2"/>
<polygon points="1456,324.6 1501.8,326 1501.8,328 1470,326.2" fill="#c9c9c9"/>
<rect x="1344.8" y="326.4" width="156.5" height="48" fill="#fff" fill-opacity=".94" stroke="#cdcdcd" stroke-width="1"/>
<text x="1360.8" y="343.8" font-family="Liberation Sans, sans-serif" font-size="14" fill="#111" textLength="124" lengthAdjust="spacing">Datum: 10/10/2024</text>
<text x="1360.8" y="365.6" font-family="Liberation Sans, sans-serif" font-size="14" fill="#111" textLength="67" lengthAdjust="spacing">SPI 6: 1.50</text>
</svg>
<div class="btn" style="left:8px;width:112.7px">SPI 6 mnd<i class="caret"></i></div>
<div class="btn" style="left:397px;width:212.70000000000005px">december<i class="caret"></i></div>
<div class="btn" style="left:620px;width:145.5px">21<i class="caret"></i></div>
<div class="btn" style="left:776px;width:213px">2024<i class="caret"></i></div>
<div class="btn" style="left:1774.3px;width:78.40000000000009px">Actueel</div>
</body></html>
